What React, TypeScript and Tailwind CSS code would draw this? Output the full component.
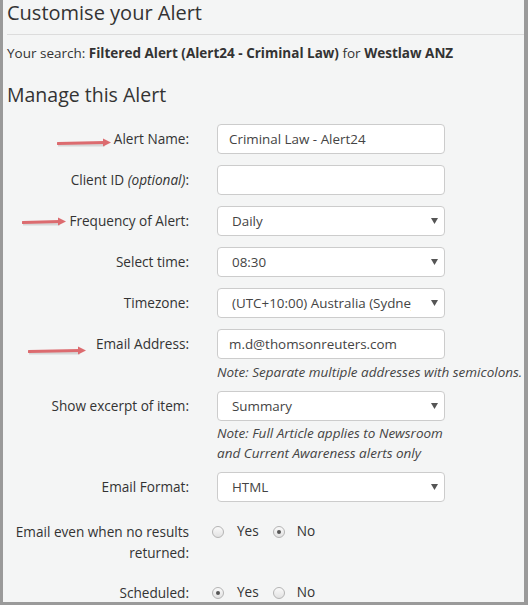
import type { ReactNode } from 'react'

const font = { fontFamily: '"Open Sans", "Noto Sans", sans-serif' }

function Caret() {
  return (
    <svg width="7" height="6" viewBox="0 0 7 6" className="shrink-0">
      <path d="M0 0 L7 0 L3.5 6 Z" fill="#555" />
    </svg>
  )
}

function TextBox({ value }: { value?: string }) {
  return (
    <div className="flex h-[30px] w-[228px] items-center rounded-[4px] border border-[#cccccc] bg-white px-[11px] text-[13.4px] text-[#444]">
      {value}
    </div>
  )
}

function SelectBox({ value }: { value: string }) {
  return (
    <div className="flex h-[30px] w-[228px] items-center overflow-hidden rounded-[4px] border border-[#cccccc] bg-white pl-[14px] pr-[6px] text-[13.4px] text-[#444]">
      <span className="mr-[20px] flex-1 overflow-hidden whitespace-nowrap">{value}</span>
      <Caret />
    </div>
  )
}

function Radio({ checked }: { checked?: boolean }) {
  return (
    <span className="flex h-[12px] w-[12px] items-center justify-center rounded-full border border-[#b4b4b4] bg-gradient-to-b from-[#fafafa] to-[#e2e2e2]">
      {checked && <span className="h-[4px] w-[4px] rounded-full bg-[#555]" />}
    </span>
  )
}

function YesNo({ yes }: { yes: boolean }) {
  return (
    <div className="-ml-[5px] flex h-[21px] items-center text-[13.6px] text-[#333]">
      <Radio checked={yes} />
      <span className="ml-[13px]">Yes</span>
      <span className="ml-[14px]">
        <Radio checked={!yes} />
      </span>
      <span className="ml-[12px]">No</span>
    </div>
  )
}

function Row({ label, children, className = '' }: { label: ReactNode; children: ReactNode; className?: string }) {
  return (
    <div className={`flex ${className}`}>
      <div className="w-[186px] shrink-0 pt-[5px] text-right text-[13.6px] leading-[20px] text-[#333]">{label}</div>
      <div className="ml-[28px]">{children}</div>
    </div>
  )
}

function Note({ children }: { children: ReactNode }) {
  return <div className="whitespace-nowrap text-[13.5px] italic leading-[20px] text-[#444]">{children}</div>
}

// hand-drawn annotation arrows from the screenshot
function RedArrow({ x, y, w }: { x: number; y: number; w: number }) {
  return (
    <svg
      width={w + 4}
      height="14"
      viewBox={`0 0 ${w + 4} 14`}
      className="absolute"
      style={{ left: x, top: y - 7 }}
    >
      <line x1="1" y1="9" x2={w - 6} y2="9" stroke="#000" strokeOpacity="0.12" strokeWidth="3" />
      <line x1="1" y1="7.5" x2={w - 6} y2="6.5" stroke="#dc6b6f" strokeWidth="3" strokeLinecap="round" />
      <path d={`M${w - 8} 2.5 L${w} 6.5 L${w - 8} 10.5 Z`} fill="#dc6b6f" />
    </svg>
  )
}

export default function App() {
  return (
    <div
      className="relative h-[605px] w-[528px] overflow-hidden border-b-[3px] border-l-[3px] border-r-[4px] border-[#9a9a9a] bg-[#f4f5f5] text-[#333]"
      style={font}
    >
      <div className="pl-[4px]">
        <h1 className="pt-[1px] text-[20px] font-normal leading-[24px] text-[#333]">Customise your Alert</h1>
        <div className="mt-[9px] border-t border-[#dcdcdc]" />
        <p className="mt-[8px] text-[13.5px] leading-[20px]">
          Your search: <b className="font-bold">Filtered Alert (Alert24 - Criminal Law)</b> for{' '}
          <b className="font-bold">Westlaw ANZ</b>
        </p>
        <h2 className="mt-[20px] text-[19.5px] leading-[24px] text-[#333]">Manage this Alert</h2>
      </div>

      <div className="mt-[17px] flex flex-col">
        <Row label="Alert Name:" className="mb-[11px]">
          <TextBox value="Criminal Law - Alert24" />
        </Row>
        <Row
          label={
            <>
              Client ID <i>(optional)</i>:
            </>
          }
          className="mb-[11px]"
        >
          <TextBox />
        </Row>
        <Row label="Frequency of Alert:" className="mb-[11px]">
          <SelectBox value="Daily" />
        </Row>
        <Row label="Select time:" className="mb-[11px]">
          <SelectBox value="08:30" />
        </Row>
        <Row label="Timezone:" className="mb-[11px]">
          <SelectBox value="(UTC+10:00) Australia (Sydney)" />
        </Row>
        <Row label="Email Address:" className="mb-[9px]">
          <TextBox value="m.d@thomsonreuters.com" />
          <div className="mt-[3px]">
            <Note>Note: Separate multiple addresses with semicolons.</Note>
          </div>
        </Row>
        <Row label="Show excerpt of item:" className="mb-[9px]">
          <SelectBox value="Summary" />
          <div className="mt-[2px]">
            <Note>Note: Full Article applies to Newsroom</Note>
            <Note>and Current Awareness alerts only</Note>
          </div>
        </Row>
        <Row label="Email Format:" className="mb-[19px]">
          <SelectBox value="HTML" />
        </Row>
        <div className="mb-[19px] flex">
          <div className="w-[186px] shrink-0 text-right text-[13.6px] leading-[21px]">
            Email even when no results returned:
          </div>
          <div className="ml-[28px]">
            <YesNo yes={false} />
          </div>
        </div>
        <div className="flex">
          <div className="w-[186px] shrink-0 text-right text-[13.6px] leading-[21px]">Scheduled:</div>
          <div className="ml-[28px]">
            <YesNo yes={true} />
          </div>
        </div>
      </div>

      <RedArrow x={54} y={143} w={54} />
      <RedArrow x={19} y={222} w={44} />
      <RedArrow x={25} y={351} w={58} />
    </div>
  )
}
